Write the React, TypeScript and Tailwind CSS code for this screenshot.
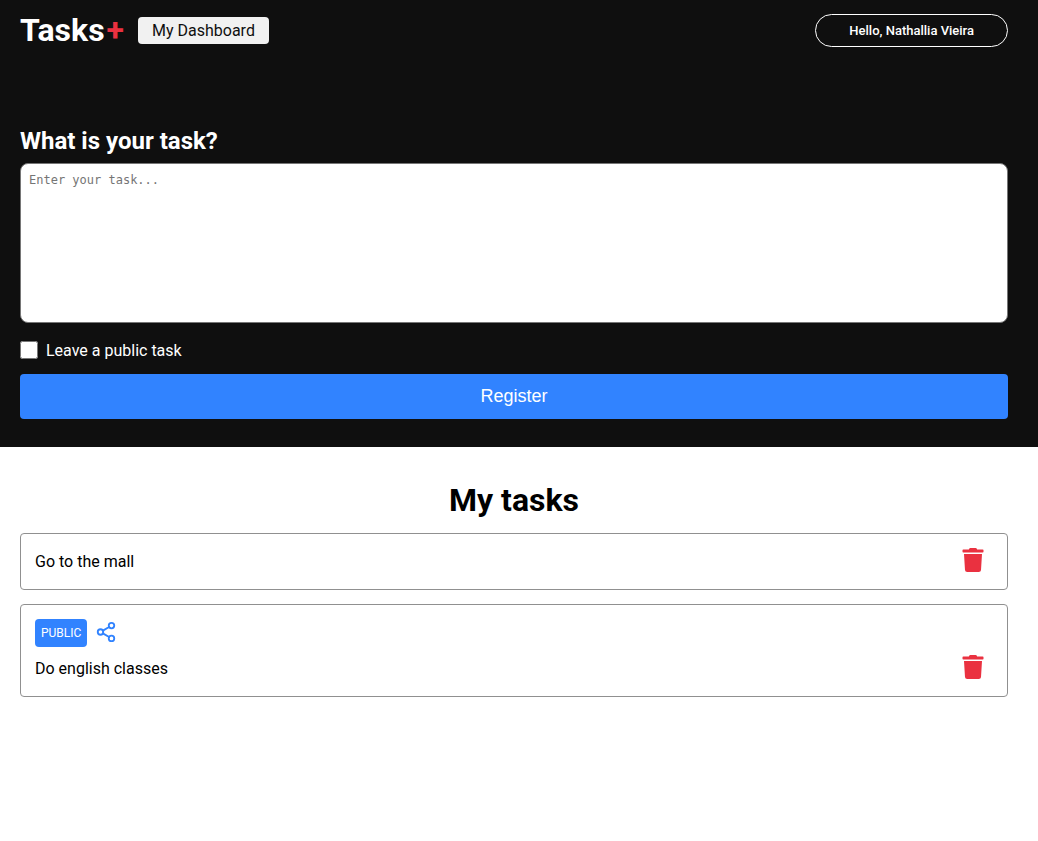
import { useState } from "react";
import { FaTrash } from "react-icons/fa";
import { FiShare2 } from "react-icons/fi";

type Task = { id: number; text: string; isPublic: boolean };

const initialTasks: Task[] = [
  { id: 1, text: "Go to the mall", isPublic: false },
  { id: 2, text: "Do english classes", isPublic: true },
];

function Header() {
  return (
    <header className="flex h-15 items-center justify-between pr-[30px] pl-5">
      <div className="flex items-center gap-3.5">
        <a href="/" className="text-[32px] leading-[38px] font-bold text-white">
          Tasks<span className="pl-0.5 text-[#ea3140]">+</span>
        </a>
        <a
          href="/dashboard"
          className="rounded bg-[#f1f1f1] px-3.5 text-base leading-[27px] text-[#0f0f0f]"
        >
          My Dashboard
        </a>
      </div>
      <button
        type="button"
        className="rounded-full border border-white px-[33px] pt-2 pb-[7px] text-[13px] leading-4 font-medium text-white"
      >
        Hello, Nathallia Vieira
      </button>
    </header>
  );
}

function TaskCard({ task, onDelete }: { task: Task; onDelete: () => void }) {
  return (
    <article className="flex flex-col rounded border border-[#909090] p-3.5 leading-[27px]">
      {task.isPublic && (
        <div className="mb-2 flex items-start gap-2">
          <span className="rounded bg-[#3183ff] px-1.5 text-xs leading-7 text-white">PUBLIC</span>
          <button type="button" aria-label="Share task" className="pt-0.5 text-[#3183ff]">
            <FiShare2 size={22} />
          </button>
        </div>
      )}
      <div className="flex items-start justify-between">
        <p>{task.text}</p>
        <button
          type="button"
          aria-label="Delete task"
          onClick={onDelete}
          className="mr-2 text-[#ea3140]"
        >
          <FaTrash size={24} />
        </button>
      </div>
    </article>
  );
}

export default function App() {
  const [tasks, setTasks] = useState(initialTasks);
  const [text, setText] = useState("");
  const [isPublic, setIsPublic] = useState(false);

  const register = () => {
    if (!text.trim()) return;
    setTasks([...tasks, { id: Date.now(), text, isPublic }]);
    setText("");
    setIsPublic(false);
  };

  return (
    <div className="min-h-screen bg-white font-[Roboto,sans-serif] text-black">
      <div className="bg-[#0f0f0f] pb-7">
        <Header />
        <form
          className="flex flex-col pt-[66px] pr-[30px] pl-5"
          onSubmit={(e) => {
            e.preventDefault();
            register();
          }}
        >
          <label htmlFor="task" className="mb-1.5 text-2xl leading-[31px] font-bold text-white">
            What is your task?
          </label>
          <textarea
            id="task"
            value={text}
            onChange={(e) => setText(e.target.value)}
            placeholder="Enter your task..."
            className="h-40 w-full resize-none rounded-lg border border-[#767676] bg-white p-2 font-['DejaVu_Sans_Mono',monospace] text-xs leading-4 text-black placeholder:text-[#757575]"
          />
          <div className="mt-4 mb-[11px] flex items-start gap-2">
            <input
              id="public"
              type="checkbox"
              checked={isPublic}
              onChange={(e) => setIsPublic(e.target.checked)}
              className="mt-0.5 size-[18px]"
            />
            <label htmlFor="public" className="leading-6 text-white">
              Leave a public task
            </label>
          </div>
          <button
            type="submit"
            className="rounded bg-[#3183ff] pt-2 pb-[9px] font-['Liberation_Sans',Arial,sans-serif] text-lg leading-7 text-white"
          >
            Register
          </button>
        </form>
      </div>
      <section className="flex flex-col gap-3.5 pt-[34px] pr-[30px] pl-5">
        <h1 className="text-center text-[32px] leading-[38px] font-bold">My tasks</h1>
        {tasks.map((task) => (
          <TaskCard
            key={task.id}
            task={task}
            onDelete={() => setTasks(tasks.filter((t) => t.id !== task.id))}
          />
        ))}
      </section>
    </div>
  );
}
